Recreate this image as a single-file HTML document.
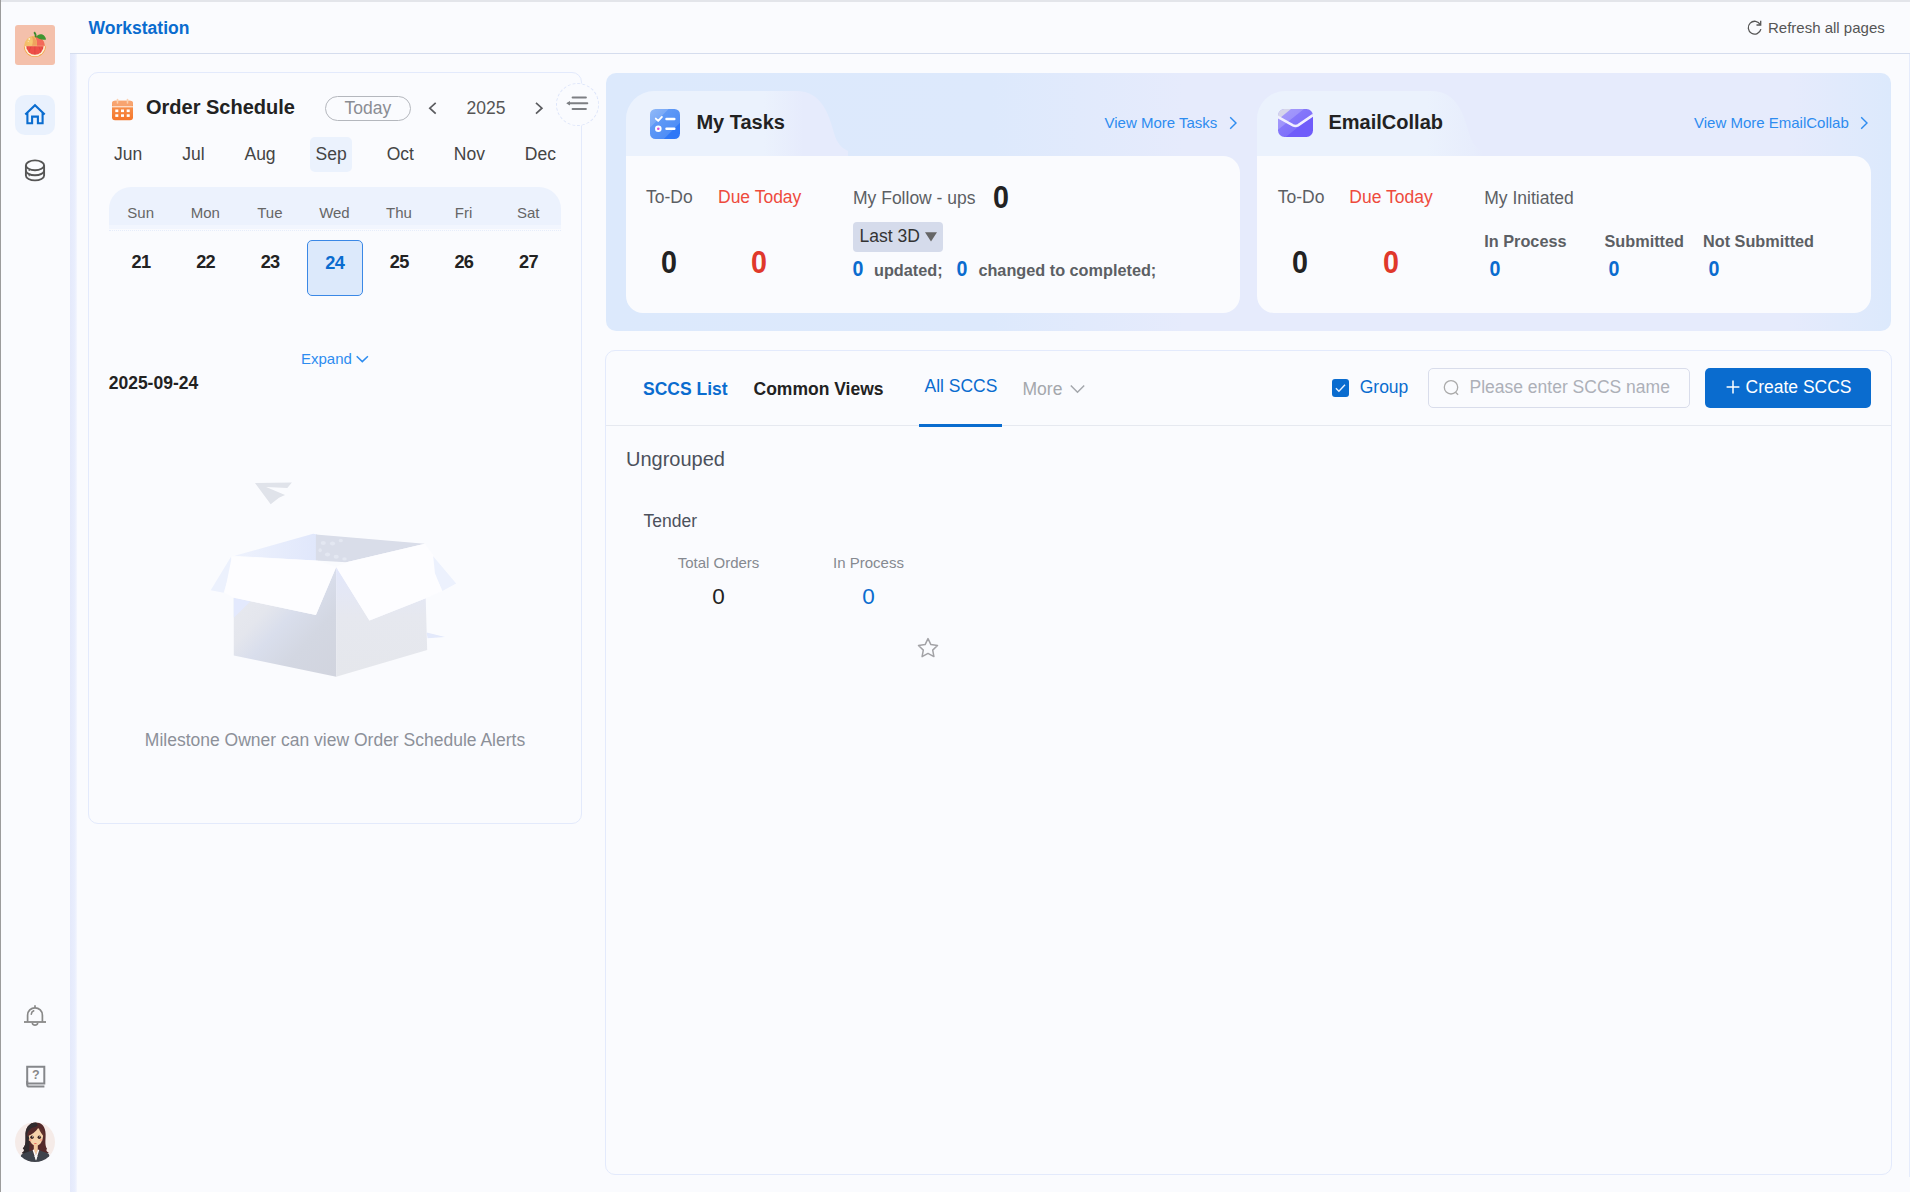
<!DOCTYPE html>
<html lang="en">
<head>
<meta charset="utf-8">
<title>Workstation</title>
<style>
*{box-sizing:border-box;margin:0;padding:0}
html,body{width:1910px;height:1192px;overflow:hidden}
body{position:relative;background:#fafbfe;font-family:"Liberation Sans",sans-serif;color:#222;font-size:17px}
.abs{position:absolute}
.t{position:absolute;white-space:nowrap;line-height:1}
.c{transform:translateX(-50%)}
.d1{font-size:31.5px;font-weight:bold;transform:translateX(-50%) scaleX(.91)}
.d2{font-size:22.1px;font-weight:bold;transform:translateX(-50%) scaleX(.89)}
.blue{color:#0a6ccf}
.lblue{color:#2d8cf0}
.red{color:#e0382b}
.b{font-weight:bold}
#topbar{left:0;top:0;width:1910px;height:2px;background:#e3e5ea}
#leftline{left:0;top:0;width:1px;height:1192px;background:#9c9c9c}
#hdrline{left:70px;top:53px;width:1840px;height:1px;background:#d5ddee}
#strip{left:70px;top:54px;width:7px;height:1138px;background:linear-gradient(90deg,#e4e9fb,#e9eefd 70%,#f4f6fe)}
#rstrip{left:1909px;top:54px;width:1px;height:1123px;background:#e6ecfc}
.card{position:absolute;border:1px solid #e3eafc;border-radius:10px;background:#fafbfe}
#months span{padding:0 5px 0 6px;margin-left:-1px;border-radius:5px}
#months .sel{background:#ebf2fd}
.wk span{flex:1 1 0}
.dt span{letter-spacing:-0.7px}
</style>
</head>
<body>
<div class="abs" id="topbar"></div>
<div class="abs" id="leftline"></div>
<div class="abs" id="hdrline"></div>
<div class="abs" id="strip"></div>
<div class="abs" id="rstrip"></div>

<!-- SIDEBAR -->
<div id="sidebar">
  <div class="abs" style="left:15px;top:25px;width:40px;height:40px;border-radius:3px;background:#f4c0ab;overflow:hidden">
    <svg width="40" height="40" viewBox="0 0 40 40">
      <defs><radialGradient id="lg" cx=".3" cy=".3" r=".8"><stop offset="0" stop-color="#f6c872"/><stop offset="1" stop-color="#eea552"/></radialGradient></defs>
      <circle cx="19.5" cy="21" r="10.3" fill="url(#lg)"/>
      <path d="M19.5 10.7a10.3 10.3 0 0 1 10.3 10.3H21.8C22.3 17 21.5 13 19.5 10.7z" fill="#f36a5a"/>
      <path d="M16.8 11.3C20 12.5 22.3 16 21.8 21H16.8C18.3 18 18.3 14 16.8 11.3z" fill="#efa25e"/>
      <circle cx="14.3" cy="14" r=".9" fill="#fdeecb"/><circle cx="13.3" cy="16.4" r=".6" fill="#fbe2ae"/>
      <path d="M8.9 21H30.9A11 11 0 0 1 8.9 21z" fill="#f2a247"/>
      <path d="M9.6 21H30.2A10.3 10.3 0 0 1 9.6 21z" fill="#fdf1d2"/>
      <path d="M11.2 21H28.6A8.7 8.7 0 0 1 11.2 21z" fill="#ee4f48"/>
      <path d="M19.9 21v8.5M16 21.5l-2.3 5.5M23.8 21.5l2.3 5.5M13 21.5l-1 2.5M26.8 21.5l1 2.5" stroke="#c93a38" stroke-width=".7" opacity=".6"/>
      <path d="M8.9 21H30.9" stroke="#f6c08a" stroke-width=".5"/>
      <path d="M19.2 7.1c1.3 1.5 1.8 3.3 1.6 5.3" stroke="#3c8a2c" stroke-width="1.9" fill="none"/>
      <path d="M21.6 12c.5-2.3 3.5-3.3 5.8-2.4 2 .8 3.2 2.8 3.7 4.9-3 .6-7 .2-9.5-2.5z" fill="#3f9530"/>
    </svg>
  </div>
  <div class="abs" style="left:15px;top:95px;width:40px;height:40px;border-radius:10px;background:#e9f1fd"></div>
  <svg class="abs" style="left:23px;top:102px" width="24" height="24" viewBox="0 0 24 24" fill="none" stroke="#0a6ccf" stroke-width="2.1" stroke-linejoin="miter">
    <path d="M2.3 12.6L12 3.2l9.7 9.4M4.4 10.8V21.2h4.7v-6.6h5.8v6.6h4.7V10.8"/>
  </svg>
  <svg class="abs" style="left:23px;top:158px" width="24" height="24" viewBox="0 0 24 24" fill="none" stroke="#555" stroke-width="1.9">
    <ellipse cx="12" cy="7.3" rx="9.1" ry="4.9"/>
    <path d="M2.9 7.3v10.2c0 2.7 4.1 4.9 9.1 4.9s9.1-2.2 9.1-4.9V7.3"/>
    <path d="M2.9 12.4c0 2.7 4.1 4.9 9.1 4.9s9.1-2.2 9.1-4.9"/>
    <path d="M5.6 12.5h1.2M5.6 17.6h1.2" stroke-width="1.2"/>
  </svg>
  <svg class="abs" style="left:23px;top:1004px" width="24" height="24" viewBox="0 0 24 24" fill="none" stroke="#888" stroke-width="1.7">
    <path d="M4.6 17.8v-6.6a7.4 7.4 0 0 1 14.8 0v6.6"/>
    <path d="M1 18h22" stroke-width="1.8"/>
    <path d="M12 1.2v2.6"/>
    <path d="M9.2 19a2.9 2.9 0 0 0 5.6 0" stroke-width="1.6"/>
    <path d="M8.3 10.2a4 4 0 0 1 2.4-3.4" stroke-width="1.6" stroke-linecap="round"/>
  </svg>
  <svg class="abs" style="left:23px;top:1064px" width="24" height="24" viewBox="0 0 24 24" fill="none" stroke="#85878b" stroke-width="2">
    <path d="M21.3 2.8H4.2V19.6H21.3z"/>
    <path d="M4.2 17v3.4c0 1.4 1 2.2 2.2 2.2h15"/>
    <text x="12.7" y="15.3" font-family="Liberation Sans, sans-serif" font-size="12.5" font-weight="bold" text-anchor="middle" fill="#888" stroke="none">?</text>
  </svg>
  <div class="abs" style="left:15px;top:1121.5px;width:40px;height:40px;border-radius:50%;background:#f5ebe8;overflow:hidden">
    <svg width="40" height="40" viewBox="0 0 40 40">
      <path d="M21 .6C13.5 .6 10 7 10.5 14c0 6 .5 9-2.7 12.5 2.2 1 1.2 3.5-1 4.5l7 3h14l6-3.4c-2.6-.8-2.9-3-1.8-3.9-2.5-3.7-1.2-9.7-1.4-14.7C30.4 5 27 .6 21 .6z" fill="#54292a"/>
      <path d="M21 .6C13.5 .6 10 7 10.5 14c0 6 .5 9-2.7 12.5 2.2 1 1.2 3.5-1 4.5l7 3 1-18c0-6 3-10 8-12.5-.6-1.8-1.2-2.9-1.8-2.9z" fill="#2f2a2d"/>
      <path d="M13.8 13.5c0-5 3-7.5 7.2-7.5s7.1 2.5 7.1 7.5c0 4-2.6 10.4-7.1 10.4s-7.2-6.4-7.2-10.4z" fill="#f5d2aa"/>
      <path d="M18.8 22h4v6.5l-2 5-2-5z" fill="#f3c79e"/>
      <path d="M11.8 14.5C12.5 8 17 3.5 23.5 5.5 21 9.5 16.5 13 11.8 14.5z" fill="#54292a"/>
      <path d="M23.5 5.5c4 1 6.3 4.5 6.3 10.5-2.5-3.2-5-6.5-6.3-10.5z" fill="#5e302c"/>
      <circle cx="17" cy="15.2" r="1.7" fill="#3a2320"/><circle cx="24.3" cy="15.2" r="1.7" fill="#3a2320"/>
      <circle cx="17.5" cy="14.7" r=".5" fill="#fff"/><circle cx="24.8" cy="14.7" r=".5" fill="#fff"/>
      <ellipse cx="15.2" cy="18" rx="1.5" ry="1" fill="#f7a88a"/><ellipse cx="26" cy="17.9" rx="1.5" ry="1" fill="#f7a88a"/>
      <path d="M18.9 20.9q1.5 1.8 3 0z" fill="#e8504a"/>
      <path d="M6.5 32.5C10 30.5 14 30 17.3 28.3L21 38.5 24.6 28.3c3 1.5 6.4 1.9 9 3.5L37 40H3z" fill="#3e434c"/>
      <path d="M17.6 28.1L21 38.6 24.3 28.1 22.9 27.4 20.9 33 18.9 27.4z" fill="#fbfbfb"/>
    </svg>
  </div>
</div>

<!-- HEADER -->
<div class="t b blue" style="left:88.6px;top:19.9px;font-size:17.5px">Workstation</div>
<svg class="abs" style="left:1746px;top:19px" width="17" height="17" viewBox="0 0 17 17" fill="none" stroke="#555" stroke-width="1.3">
  <path d="M14.3 5.6A6.4 6.4 0 1 0 14.9 10.2"/>
  <path d="M14.7 1.8v4.2h-4.2" stroke-width="1.3"/>
</svg>
<div class="t" style="left:1768px;top:20.3px;font-size:15px;color:#555">Refresh all pages</div>

<!-- ORDER SCHEDULE -->
<div class="card" id="os" style="left:88px;top:72px;width:494px;height:752px"></div>
<svg class="abs" style="left:111px;top:97.8px" width="23" height="23" viewBox="0 0 23 23">
  <defs><linearGradient id="og" x1="0" y1="0" x2="0" y2="1"><stop offset="0" stop-color="#f79a5a"/><stop offset="1" stop-color="#f5762a"/></linearGradient></defs>
  <rect x="1" y="2.8" width="21" height="19.5" rx="3" fill="url(#og)"/>
  <rect x="1" y="2.8" width="21" height="6" rx="3" fill="#f8a877" opacity=".8"/>
  <rect x="1" y="8.3" width="21" height="1" fill="#fff" opacity=".9"/>
  <rect x="5.7" y="0.8" width="1.6" height="5" rx=".8" fill="#fbd0b0"/><rect x="15.7" y="0.8" width="1.6" height="5" rx=".8" fill="#fbd0b0"/>
  <g fill="#fff"><rect x="4.3" y="11.5" width="3" height="2.6"/><rect x="10" y="11.5" width="3" height="2.6"/><rect x="15.7" y="11.5" width="3" height="2.6"/>
  <rect x="4.3" y="16.3" width="3" height="2.6"/><rect x="10" y="16.3" width="3" height="2.6"/><rect x="15.7" y="16.3" width="3" height="2.6"/></g>
</svg>
<div class="t b" style="left:146px;top:97.3px;font-size:20px;color:#222">Order Schedule</div>
<div class="abs" style="left:325px;top:96px;width:86px;height:25px;border:1px solid #b4b7bd;border-radius:13px"></div>
<div class="t" style="left:344.5px;top:99.7px;font-size:17.5px;color:#8a8d93">Today</div>
<svg class="abs" style="left:427px;top:101px" width="12" height="14" viewBox="0 0 12 14" fill="none" stroke="#5a5b5f" stroke-width="1.7"><path d="M8.7 1.8L2.8 7.2 8.7 12.6"/></svg>
<div class="t" style="left:466.5px;top:99.7px;font-size:17.5px;color:#555">2025</div>
<svg class="abs" style="left:533.4px;top:101px" width="12" height="14" viewBox="0 0 12 14" fill="none" stroke="#5a5b5f" stroke-width="1.7"><path d="M3 1.8L8.9 7.2 3 12.6"/></svg>
<div class="abs" style="left:556px;top:83px;width:43px;height:43px;border-radius:50%;background:#fafbfe;border:1px dashed #dde5fa"></div>
<svg class="abs" style="left:565px;top:93px" width="24" height="20" viewBox="0 0 24 20" fill="none" stroke="#7d7f83" stroke-width="2" stroke-linecap="round">
  <path d="M7.6 4.4H20.9M3.5 10.2H22.3M7.6 16H20.9"/>
  <path d="M1.2 10.2L5 7.9V12.5z" fill="#7d7f83" stroke="none"/>
</svg>
<div class="abs" id="months" style="left:109px;top:137px;width:452px;height:35px;display:flex;justify-content:space-between;font-size:17.5px;color:#444;line-height:35px">
  <span>Jun</span><span>Jul</span><span>Aug</span><span class="sel">Sep</span><span>Oct</span><span>Nov</span><span>Dec</span>
</div>
<div class="abs" style="left:109px;top:187px;width:452px;height:38px;background:#ecf2fd;border-radius:22px 22px 0 0"></div>
<div class="abs" style="left:109px;top:225px;width:452px;height:4px;background:#f2f6fe"></div>
<div class="abs" style="left:109px;top:230px;width:452px;height:0;border-top:1px dotted #e6edfb"></div>
<div class="abs wk" style="left:108.4px;top:204.8px;width:452px;display:flex;font-size:15px;color:#666;line-height:1;text-align:center">
  <span>Sun</span><span>Mon</span><span>Tue</span><span>Wed</span><span>Thu</span><span>Fri</span><span>Sat</span>
</div>
<div class="abs" style="left:307px;top:240px;width:56px;height:56px;border:1px solid #3a88e6;border-radius:5px;background:#dce9fb"></div>
<div class="abs wk dt b" style="left:108.7px;top:253.4px;width:452px;display:flex;font-size:18.2px;color:#222;line-height:1;text-align:center">
  <span>21</span><span>22</span><span>23</span><span class="blue" style="position:relative;top:1px">24</span><span>25</span><span>26</span><span>27</span>
</div>
<div class="t lblue" style="left:301px;top:351px;font-size:15px">Expand</div>
<svg class="abs" style="left:355.2px;top:354px" width="15" height="10" viewBox="0 0 15 10" fill="none" stroke="#2d8cf0" stroke-width="1.5"><path d="M1.7 2.2l5.6 5.4 5.6-5.4"/></svg>
<div class="t b" style="left:108.7px;top:375.2px;font-size:17.5px;color:#222">2025-09-24</div>
<svg class="abs" style="left:195px;top:470px" width="280" height="220" viewBox="0 0 1517 1192">
  <defs>
    <linearGradient id="bl" x1="0" y1="0" x2="1" y2="1"><stop offset="0" stop-color="#e9ebf1"/><stop offset=".35" stop-color="#e4e6ed"/><stop offset=".5" stop-color="#d9deec"/><stop offset=".7" stop-color="#d3d7e2"/><stop offset="1" stop-color="#d1d4de"/></linearGradient>
    <linearGradient id="br" x1="0" y1="0" x2="0" y2="1"><stop offset="0" stop-color="#e2e7fb"/><stop offset=".45" stop-color="#e6e8ef"/><stop offset="1" stop-color="#e5e7ec"/></linearGradient>
    <linearGradient id="bi" x1="0" y1="0" x2="1" y2="0"><stop offset="0" stop-color="#eef2fd"/><stop offset="1" stop-color="#e0e7fb"/></linearGradient>
    <filter id="bb" x="-5%" y="-5%" width="110%" height="110%"><feGaussianBlur stdDeviation="3"/></filter>
  </defs>
  <g filter="url(#bb)">
  <path d="M325 70L525 68 500 98 385 92 488 135 455 150 410 185z" fill="#e0e3ea"/>
  <path d="M215 465L640 345 662 350 662 492z" fill="url(#bi)"/>
  <path d="M655 350L1245 400 820 500 655 490z" fill="#d9dde9"/>
  <g fill="#e3e7f1"><ellipse cx="695" cy="396" rx="14" ry="11"/><ellipse cx="745" cy="398" rx="14" ry="11"/><ellipse cx="790" cy="382" rx="11" ry="10"/><ellipse cx="678" cy="435" rx="9" ry="11"/><ellipse cx="718" cy="458" rx="14" ry="11"/><ellipse cx="765" cy="470" rx="14" ry="11"/><ellipse cx="810" cy="482" rx="12" ry="9"/></g>
  <path d="M195 470L85 652 155 665 200 520z" fill="#ecf1fd"/>
  <path d="M1280 455L1415 615 1340 655 1295 560z" fill="#ecf1fd"/>
  <path d="M210 692L655 785 765 525 765 1120 210 1005z" fill="url(#bl)"/>
  <path d="M210 692L300 712 210 800z" fill="#e3e9fd"/>
  <path d="M765 525L945 815 1250 695 1258 975 765 1120z" fill="url(#br)"/>
  <path d="M1255 880L1355 905 1260 912z" fill="#e3e9fb"/>
  <path d="M200 468L660 490 765 525 655 785 210 692 160 665z" fill="#fdfdff"/>
  <path d="M765 525L820 500 1245 400 1290 460 1300 560 1340 655 1250 695 945 815z" fill="#fdfdff"/>
  </g>
</svg>
<div class="t c" style="left:335px;top:731.5px;font-size:17.5px;color:#8c9099">Milestone Owner can view Order Schedule Alerts</div>

<!-- TOP PANEL -->
<div class="abs" id="panel" style="left:606px;top:73px;width:1285px;height:257.5px;border-radius:10px;background:linear-gradient(90deg,#dce9fc 0%,#dde9fc 30%,#e6ebfc 45%,#e6ebfc 92%,#dce9fc 100%)"></div>
<svg class="abs" style="left:626px;top:91px" width="222" height="65" viewBox="0 0 222 65">
  <defs><linearGradient id="tg1" x1="0" y1="0" x2="1" y2="0"><stop offset="0" stop-color="#ebf2fd"/><stop offset=".62" stop-color="#ebf2fd"/><stop offset=".8" stop-color="#e6ebfc"/><stop offset="1" stop-color="#e6ebfc"/></linearGradient></defs>
  <path d="M0 65V28A28 28 0 0 1 28 0H170C196 0 203 24 208 42C211 53 216 57 222 60V65z" fill="url(#tg1)"/>
</svg>
<svg class="abs" style="left:1257px;top:91px" width="226" height="65" viewBox="0 0 226 65">
  <defs><linearGradient id="tg2" x1="0" y1="0" x2="1" y2="0"><stop offset="0" stop-color="#ebf2fd"/><stop offset=".75" stop-color="#ebf2fd"/><stop offset=".95" stop-color="#e7edfc"/><stop offset="1" stop-color="#e6ebfc"/></linearGradient></defs>
  <path d="M0 65V28A28 28 0 0 1 28 0H174C200 0 207 24 212 42C215 53 220 57 226 60V65z" fill="url(#tg2)"/>
</svg>
<div class="abs" style="left:626px;top:156px;width:614px;height:157px;background:#fafbfe;border-radius:0 17px 17px 17px"></div>
<div class="abs" style="left:1257px;top:156px;width:614px;height:157px;background:#fafbfe;border-radius:0 17px 17px 17px"></div>

<!-- My Tasks -->
<svg class="abs" style="left:650px;top:108.5px" width="30" height="30" viewBox="0 0 30 30">
  <defs><linearGradient id="tk" x1="0" y1="0" x2="1" y2="1"><stop offset="0" stop-color="#8fb8f8"/><stop offset=".3" stop-color="#7aaaf7"/><stop offset=".32" stop-color="#5f99f6"/><stop offset=".72" stop-color="#4f8ef6"/><stop offset=".74" stop-color="#2f78f7"/><stop offset="1" stop-color="#2f78f7"/></linearGradient></defs>
  <rect width="30" height="30" rx="5.5" fill="url(#tk)"/>
  <path d="M5.8 9.6l2.4 2.3 3.7-4" fill="none" stroke="#fff" stroke-width="1.9" stroke-linecap="round" stroke-linejoin="round"/>
  <path d="M16.5 10h7.8M16.5 19.8h7.8" stroke="#fff" stroke-width="2.5" stroke-linecap="round"/>
  <circle cx="8.3" cy="19.8" r="3.3" fill="#fff"/><circle cx="8.3" cy="19.8" r="1.3" fill="#d64fd8"/>
</svg>
<div class="t b" style="left:696.4px;top:111.9px;font-size:20px;color:#222">My Tasks</div>
<div class="t lblue" style="left:1104.5px;top:115.3px;font-size:15px">View More Tasks</div>
<svg class="abs" style="left:1227.3px;top:116px" width="12" height="14" viewBox="0 0 12 14" fill="none" stroke="#2d8cf0" stroke-width="1.4"><path d="M3.2 1.2L9 7 3.2 12.8"/></svg>
<div class="t" style="left:646px;top:189.1px;font-size:17.5px;color:#5c5f64">To-Do</div>
<div class="t" style="left:718px;top:189.1px;font-size:17.5px;color:#ee4a3c">Due Today</div>
<div class="t d1" style="left:669.3px;top:246.6px;color:#222">0</div>
<div class="t d1 red" style="left:759.2px;top:246.6px">0</div>
<div class="t" style="left:853px;top:189.6px;font-size:17.5px;color:#5c5f64">My Follow - ups</div>
<div class="t d1" style="left:1001.4px;top:181.8px;color:#222">0</div>
<div class="abs" style="left:853px;top:222px;width:90px;height:29.5px;border-radius:4px;background:#d5dbeb"></div>
<div class="t" style="left:859.5px;top:228.2px;font-size:17.5px;color:#333">Last 3D</div>
<svg class="abs" style="left:924px;top:231px" width="14" height="11" viewBox="0 0 14 11"><path d="M1 1.2h12L7 10.4z" fill="#666"/></svg>
<div class="t d2 blue" style="left:858.1px;top:257.6px">0</div>
<div class="t b" style="left:874px;top:262.2px;font-size:16.25px;color:#5c5f64">updated;</div>
<div class="t d2 blue" style="left:962.1px;top:257.6px">0</div>
<div class="t b" style="left:978.4px;top:262.2px;font-size:16.25px;color:#5c5f64">changed to completed;</div>

<!-- EmailCollab -->
<svg class="abs" style="left:1278px;top:109px" width="35" height="28" viewBox="0 0 35 28">
  <defs><linearGradient id="ml" x1="0" y1="0" x2="1" y2="1"><stop offset="0" stop-color="#a79dfb"/><stop offset=".36" stop-color="#9d92fb"/><stop offset=".38" stop-color="#8577fa"/><stop offset=".6" stop-color="#7f70fa"/><stop offset=".62" stop-color="#6f5cfa"/><stop offset="1" stop-color="#6f5cfa"/></linearGradient>
  <clipPath id="mc"><rect width="35" height="28" rx="6.5"/></clipPath></defs>
  <g clip-path="url(#mc)"><rect width="35" height="28" fill="url(#ml)"/>
  <path d="M0 0H13L2 9 0 8z" fill="#d6d6ea"/>
  <path d="M-1 7.5L15 16.3q2.5 1.3 5 0L36 5.5" fill="none" stroke="#f1efff" stroke-width="2.6"/></g>
</svg>
<div class="t b" style="left:1328.5px;top:112.1px;font-size:20px;color:#222">EmailCollab</div>
<div class="t lblue" style="left:1694px;top:115.3px;font-size:15px">View More EmailCollab</div>
<svg class="abs" style="left:1858.3px;top:116px" width="12" height="14" viewBox="0 0 12 14" fill="none" stroke="#2d8cf0" stroke-width="1.4"><path d="M3.2 1.2L9 7 3.2 12.8"/></svg>
<div class="t" style="left:1277.7px;top:189.1px;font-size:17.5px;color:#5c5f64">To-Do</div>
<div class="t" style="left:1349.3px;top:189.1px;font-size:17.5px;color:#ee4a3c">Due Today</div>
<div class="t d1" style="left:1300.3px;top:246.6px;color:#222">0</div>
<div class="t d1 red" style="left:1390.5px;top:246.6px">0</div>
<div class="t" style="left:1484.3px;top:189.6px;font-size:17.5px;color:#5c5f64">My Initiated</div>
<div class="t b" style="left:1484.3px;top:233.2px;font-size:16.25px;color:#5c5f64">In Process</div>
<div class="t b" style="left:1604.5px;top:233.2px;font-size:16.25px;color:#5c5f64">Submitted</div>
<div class="t b" style="left:1703px;top:233.2px;font-size:16.25px;color:#5c5f64">Not Submitted</div>
<div class="t d2 blue" style="left:1494.8px;top:257.5px">0</div>
<div class="t d2 blue" style="left:1614px;top:257.5px">0</div>
<div class="t d2 blue" style="left:1713.5px;top:257.5px">0</div>

<!-- SCCS -->
<div class="card" id="sccs" style="left:605px;top:350px;width:1287px;height:825px;border-radius:10px"></div>
<div class="abs" style="left:606px;top:425px;width:1285px;height:1px;background:#e6e9f0"></div>
<div class="t b blue" style="left:643px;top:380.5px;font-size:17.5px">SCCS List</div>
<div class="t b" style="left:753.5px;top:380.5px;font-size:17.5px;color:#222">Common Views</div>
<div class="t blue" style="left:924.5px;top:377.7px;font-size:17.5px">All SCCS</div>
<div class="abs" style="left:919px;top:424px;width:83px;height:3px;background:#0a6ccf"></div>
<div class="t" style="left:1022.5px;top:380.5px;font-size:17.5px;color:#a4a7ac">More</div>
<svg class="abs" style="left:1069px;top:383px" width="17" height="12" viewBox="0 0 17 12" fill="none" stroke="#a4a7ac" stroke-width="1.5"><path d="M1.8 2.5l6.7 6.7 6.7-6.7"/></svg>
<div class="abs" style="left:1332px;top:379px;width:17px;height:17.5px;border-radius:3px;background:#0a6ccf"></div>
<svg class="abs" style="left:1332px;top:379px" width="18" height="18" viewBox="0 0 18 18" fill="none" stroke="#e8f1ff" stroke-width="1.4"><path d="M3.9 9.3l3 3 6.1-6.5"/></svg>
<div class="t blue" style="left:1359.7px;top:379.2px;font-size:17.5px">Group</div>
<div class="abs" style="left:1428px;top:368px;width:262px;height:39.5px;border:1px solid #d9ddeb;border-radius:5px;background:#fafbfe"></div>
<svg class="abs" style="left:1442px;top:378px" width="18" height="18" viewBox="0 0 18 18" fill="none" stroke="#aaa" stroke-width="1.3"><circle cx="9" cy="9.3" r="6.7"/><path d="M13.5 14.2l2.6 2.6"/></svg>
<div class="t" style="left:1469.5px;top:379px;font-size:17.5px;color:#adb0b8">Please enter SCCS name</div>
<div class="abs" style="left:1705px;top:368px;width:166px;height:39.5px;border-radius:5px;background:#0a6ccf"></div>
<svg class="abs" style="left:1725px;top:379px" width="16" height="16" viewBox="0 0 16 16" stroke="#fff" stroke-width="1.5"><path d="M8 1.6v12.8M1.6 8h12.8"/></svg>
<div class="t" style="left:1745.5px;top:379px;font-size:17.5px;color:#fff">Create SCCS</div>
<div class="t" style="left:626px;top:449.2px;font-size:20px;color:#4c515c">Ungrouped</div>
<div class="t" style="left:643.6px;top:512.8px;font-size:17.5px;color:#4c515c">Tender</div>
<div class="t c" style="left:718.5px;top:555px;font-size:15px;color:#858990">Total Orders</div>
<div class="t c" style="left:718.5px;top:585.7px;font-size:22.5px;color:#222">0</div>
<div class="t c" style="left:868.5px;top:555px;font-size:15px;color:#858990">In Process</div>
<div class="t c blue" style="left:868.5px;top:585.7px;font-size:22.5px">0</div>
<svg class="abs" style="left:916px;top:636px" width="24" height="24" viewBox="0 0 24 24" fill="none" stroke="#a2a2a6" stroke-width="1.5" stroke-linejoin="round"><path d="M12 2.6l2.9 6 6.6.9-4.8 4.6 1.2 6.5-5.9-3.2-5.9 3.2 1.2-6.5-4.8-4.6 6.6-.9z"/></svg>

</body>
</html>
